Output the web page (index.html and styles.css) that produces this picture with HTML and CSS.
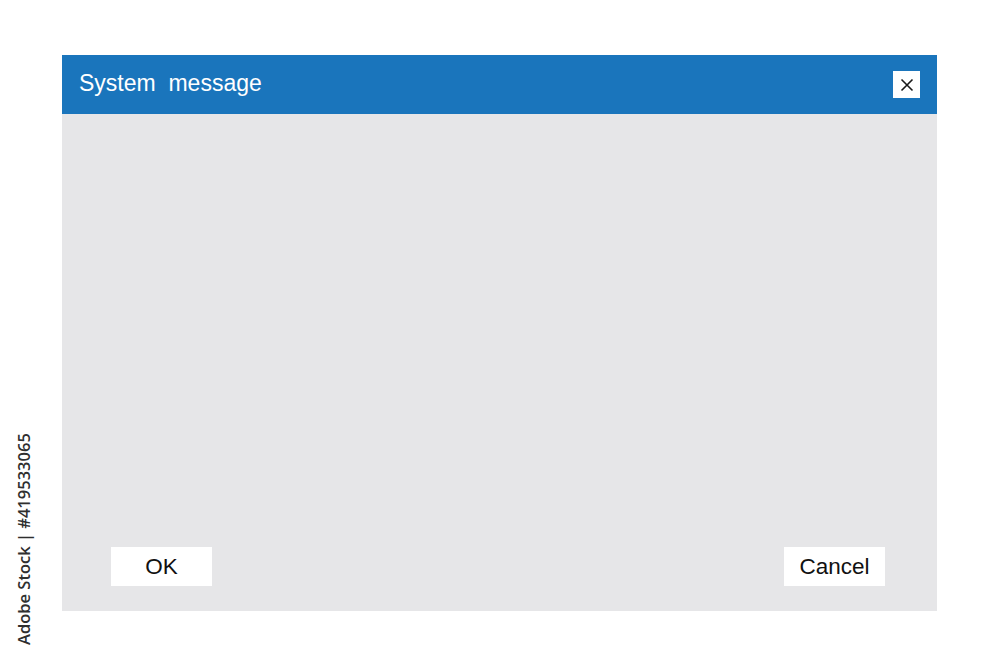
FILE: index.html
```html
<!DOCTYPE html>
<html>
<head>
<meta charset="utf-8">
<link rel="stylesheet" href="styles.css">
</head>
<body>
<div class="page">
  <div class="dialog">
    <div class="titlebar">
      <span class="title">System&nbsp; message</span>
      <button class="close" aria-label="Close">
        <svg width="14" height="14" viewBox="0 0 14 14"><path d="M1.5 1.5 L12.5 12.5 M12.5 1.5 L1.5 12.5" stroke="#1a1a1a" stroke-width="1.6" fill="none"/></svg>
      </button>
    </div>
    <div class="content">
      <div class="actions">
        <button class="btn">OK</button>
        <button class="btn">Cancel</button>
      </div>
    </div>
  </div>
  <div class="credit">Adobe Stock | #419533065</div>
</div>
</body>
</html>
```
FILE: styles.css
```css
html, body {
  margin: 0;
  padding: 0;
  background: #ffffff;
}
.page {
  position: relative;
  width: 1000px;
  height: 667px;
  padding: 55px 0 0 62px;
  box-sizing: border-box;
  font-family: "Liberation Sans", Arial, sans-serif;
}
.dialog {
  width: 875px;
  height: 556px;
  display: flex;
  flex-direction: column;
  background: #e6e6e8;
}
.titlebar {
  height: 59px;
  background: #1a75bc;
  display: flex;
  align-items: center;
  justify-content: space-between;
  padding: 0 17px 0 17px;
  flex-shrink: 0;
}
.title {
  color: #ffffff;
  font-size: 23px;
  padding-top: 0;
  margin-top: -2px;
}
.close {
  width: 27px;
  height: 27px;
  background: #ffffff;
  border: none;
  padding: 0;
  display: flex;
  align-items: center;
  justify-content: center;
}
.content {
  flex: 1;
  display: flex;
  flex-direction: column;
  justify-content: flex-end;
  padding: 0 52px 25px 49px;
}
.actions {
  display: flex;
  justify-content: space-between;
}
.btn {
  width: 101px;
  height: 39px;
  background: #ffffff;
  border: none;
  padding: 0;
  font-family: "Liberation Sans", Arial, sans-serif;
  font-size: 22.5px;
  color: #111111;
}
.credit {
  position: absolute;
  left: 12px;
  top: 645px;
  transform-origin: 0 0;
  transform: rotate(-90deg);
  white-space: nowrap;
  font-family: "Open Sans", sans-serif;
  font-weight: 600;
  font-size: 16.5px;
  color: #2f2f2f;
}
```
